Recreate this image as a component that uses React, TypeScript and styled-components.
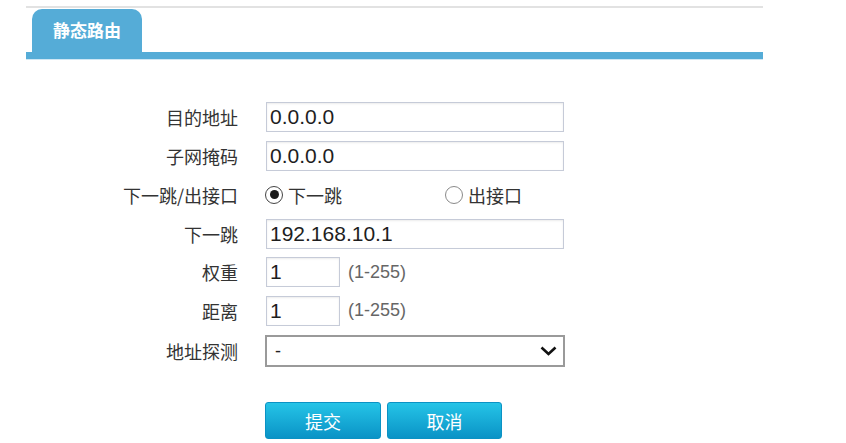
import styled, { createGlobalStyle } from 'styled-components';

const GlobalStyle = createGlobalStyle`
  body {
    margin: 0;
    background: #fff;
    font-family: "Noto Sans CJK SC", "Noto Sans", sans-serif;
  }
`;

const Page = styled.div`
  width: 737px;
  padding: 6px 0 0 26px;
`;

const TopLine = styled.div`
  height: 2px;
  background: #e2e2e2;
`;

// tab strip sits on the thick blue bar
const TabBar = styled.div`
  display: flex;
  padding: 1px 0 0 6px;
  border-bottom: 7px solid #55acd7;
  box-shadow: 0 1px 0 #cfe7f4;
`;

const Tab = styled.div`
  width: 110px;
  height: 43px;
  border-radius: 10px 10px 0 0;
  background: #55acd7;
  color: #fff;
  font-size: 17px;
  font-weight: 700;
  display: flex;
  align-items: center;
  justify-content: center;
  padding-bottom: 2px;
  box-sizing: border-box;
`;

const Form = styled.div`
  padding-top: 38px;
  display: flex;
  flex-direction: column;
`;

const Row = styled.div<{ $h: number }>`
  display: grid;
  grid-template-columns: 212px 1fr;
  column-gap: 27px;
  align-items: center;
  height: ${p => p.$h}px;
`;

const Label = styled.div`
  text-align: right;
  font-size: 18px;
  color: #333;
  white-space: nowrap;
`;

const Field = styled.div`
  display: flex;
  align-items: center;
`;

const Input = styled.div<{ $w: number }>`
  width: ${p => p.$w}px;
  height: 30px;
  box-sizing: border-box;
  border: 1px solid #c6cbd8;
  box-shadow: inset 0 1px 2px rgba(0, 0, 0, 0.08);
  padding: 0 3px;
  display: flex;
  align-items: center;
  font-family: "Liberation Sans", Arial, sans-serif;
  font-size: 21px;
  color: #1e1e1e;
  margin-left: 1px;
`;

const Hint = styled.span`
  margin-left: 8px;
  font-family: "Liberation Sans", Arial, sans-serif;
  font-size: 18px;
  color: #666;
`;

const RadioGroup = styled.div`
  display: flex;
  align-items: center;
`;

const RadioOption = styled.label<{ $w?: number }>`
  display: flex;
  align-items: center;
  gap: 5px;
  width: ${p => (p.$w ? `${p.$w}px` : 'auto')};
  font-size: 18px;
  color: #333;
`;

const RadioCircle = styled.span<{ $on: boolean }>`
  width: 18px;
  height: 18px;
  box-sizing: border-box;
  border-radius: 50%;
  border: 1.5px solid ${p => (p.$on ? '#444' : '#8a8a8a')};
  display: flex;
  align-items: center;
  justify-content: center;
  &::after {
    content: '';
    width: 9px;
    height: 9px;
    border-radius: 50%;
    background: ${p => (p.$on ? '#1a1a1a' : 'transparent')};
  }
`;

const SelectBox = styled.div`
  width: 300px;
  height: 32px;
  box-sizing: border-box;
  border: 2px solid #9a9a9a;
  display: flex;
  align-items: center;
  justify-content: space-between;
  padding: 0 6px 0 8px;
  font-family: "Liberation Sans", Arial, sans-serif;
  font-size: 18px;
  color: #222;
`;

const Buttons = styled.div`
  display: flex;
  gap: 6px;
  margin-top: 30px;
  padding-left: 239px;
`;

const Button = styled.button<{ $w: number }>`
  width: ${p => p.$w}px;
  height: 37px;
  border: 1px solid #0b92c4;
  border-radius: 3px;
  background: linear-gradient(#25c4e7, #0a93c6);
  color: #fff;
  font-family: "Noto Sans CJK SC", sans-serif;
  font-size: 18px;
  padding: 0;
  cursor: pointer;
`;

function Chevron() {
  return (
    <svg width="17" height="10" viewBox="0 0 17 10">
      <polyline points="1.5,1.5 8.5,8 15.5,1.5" fill="none" stroke="#111" strokeWidth="2.6" />
    </svg>
  );
}

export default function App() {
  return (
    <>
      <GlobalStyle />
      <Page>
        <TopLine />
        <TabBar>
          <Tab>静态路由</Tab>
        </TabBar>
        <Form>
          <Row $h={39}>
            <Label>目的地址</Label>
            <Field><Input $w={298}>0.0.0.0</Input></Field>
          </Row>
          <Row $h={39}>
            <Label>子网掩码</Label>
            <Field><Input $w={298}>0.0.0.0</Input></Field>
          </Row>
          <Row $h={39}>
            <Label>下一跳/出接口</Label>
            <RadioGroup>
              <RadioOption $w={180}><RadioCircle $on />下一跳</RadioOption>
              <RadioOption><RadioCircle $on={false} />出接口</RadioOption>
            </RadioGroup>
          </Row>
          <Row $h={39}>
            <Label>下一跳</Label>
            <Field><Input $w={298}>192.168.10.1</Input></Field>
          </Row>
          <Row $h={38}>
            <Label>权重</Label>
            <Field><Input $w={74}>1</Input><Hint>(1-255)</Hint></Field>
          </Row>
          <Row $h={39}>
            <Label>距离</Label>
            <Field><Input $w={74}>1</Input><Hint>(1-255)</Hint></Field>
          </Row>
          <Row $h={42}>
            <Label>地址探测</Label>
            <Field>
              <SelectBox>
                <span>-</span>
                <Chevron />
              </SelectBox>
            </Field>
          </Row>
          <Buttons>
            <Button $w={116}>提交</Button>
            <Button $w={115}>取消</Button>
          </Buttons>
        </Form>
      </Page>
    </>
  );
}
